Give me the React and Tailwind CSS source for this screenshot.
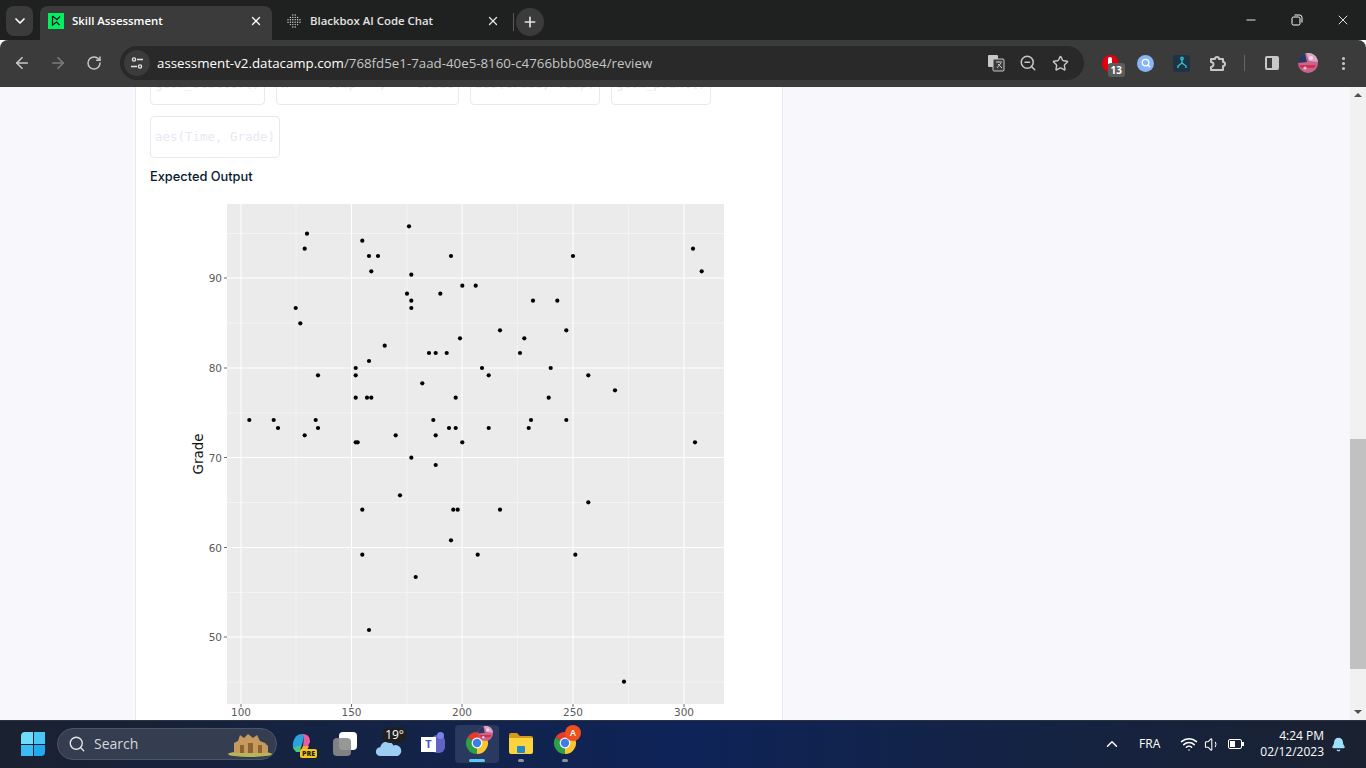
import {
  ArrowLeft,
  ArrowRight,
  Bell,
  ChevronDown,
  ChevronUp,
  EllipsisVertical,
  Minus,
  Plus,
  RotateCw,
  Search,
  Star,
  Volume1,
  Wifi,
  X,
  ZoomOut,
} from "lucide-react";

const sans = "font-['Open_Sans','Noto_Sans',sans-serif]";

// screen pixel positions of the points, read off the plot
const points = [
  [249.3, 420], [273.7, 420], [278, 428], [304.7, 435.3], [315.7, 420], [318, 428], [318, 375.3],
  [295.7, 308], [300.3, 323.3], [304.7, 248.7], [307, 233.7], [362.3, 240.7], [369, 256], [378, 256],
  [371.3, 271.3], [409, 226.3], [411.3, 274.7], [407, 293.7], [411.3, 300.7], [411.3, 308], [451, 256],
  [462.3, 285.7], [475.7, 285.7], [440.3, 293.7], [460, 338.3], [384.7, 345.7], [429, 353], [435.7, 353],
  [446.7, 353], [369, 361], [355.7, 368], [355.7, 375.3], [422.3, 383.3], [355.7, 397.7], [367, 397.7],
  [371.3, 397.7], [455.7, 397.7], [433.3, 420], [449, 428], [455.7, 428], [435.7, 435.3], [395.7, 435.3],
  [355.7, 442.3], [357.7, 442.3], [462.3, 442.3], [411.3, 457.7], [435.7, 465], [400, 495.3], [362.3, 509.7],
  [453.3, 509.7], [457.7, 509.7], [451, 540.3], [362.3, 554.7], [477.7, 554.7], [415.7, 577], [369, 630],
  [573, 256], [693, 248.7], [701.7, 271.3], [533, 300.7], [557.3, 300.7], [500, 330.3], [566.3, 330.3],
  [524.3, 338.3], [520, 353], [482, 368], [550.7, 368], [488.7, 375.3], [588.3, 375.3], [615, 390.3],
  [548.7, 397.7], [531, 420], [566.3, 420], [488.7, 428], [528.7, 428], [695, 442.3], [500, 509.7],
  [588.3, 502.3], [575.3, 554.7], [624, 681.7],
];

const xMajor = [[241, "100"], [351.5, "150"], [462, "200"], [573, "250"], [684, "300"]];
const xMinor = [296, 407, 517.5, 628.5];
const yMajor = [[278, "90"], [368, "80"], [457.5, "70"], [547.5, "60"], [637, "50"]];
const yMinor = [233.5, 323, 413, 502.5, 592.5, 682];

const ChromeLogo = ({ className }) => (
  <svg viewBox="0 0 24 24" className={className}>
    <path d="M12 12L2.47 6.5A11 11 0 0 1 21.53 6.5Z" fill="#e33b2e" />
    <path d="M12 12L21.53 6.5A11 11 0 0 1 12 23Z" fill="#fbc531" />
    <path d="M12 12L12 23A11 11 0 0 1 2.47 6.5Z" fill="#2d9f4b" />
    <circle cx="12" cy="12" r="5.4" fill="#fff" />
    <circle cx="12" cy="12" r="4.2" fill="#3a7ee8" />
  </svg>
);

const Avatar = ({ className }) => (
  <svg viewBox="0 0 20 20" className={className}>
    <circle cx="10" cy="10" r="10" fill="#c9648f" />
    <path d="M0 10A10 10 0 0 1 7 .5L9 9Z" fill="#27375f" />
    <path d="M8 0A10 10 0 0 1 20 9L11 8Z" fill="#d9a6c6" />
    <path d="M1 12h17l-2 3H3Z" fill="#d3304f" />
    <circle cx="13" cy="5" r="2" fill="#f2dbe8" />
    <circle cx="7" cy="15" r="1.6" fill="#f0c9d8" />
  </svg>
);

const Tab = ({ active, icon, title, width }) => (
  <div
    className={`flex h-[34px] items-center rounded-t-lg pb-[4px] ${width} ${
      active ? "bg-[#3b3b3b] pl-2 pr-[9px] text-white" : "pl-[14px] pr-2 text-[#e3e3e3]"
    }`}
  >
    {icon}
    <span className={`ml-2 flex-1 text-[11.4px] font-semibold ${sans}`}>{title}</span>
    <X className="size-[14px]" strokeWidth={2.2} />
  </div>
);

const TabStrip = () => (
  <div className="flex h-10 shrink-0 items-end bg-[#1f2120]">
    <div className="mb-1 ml-[6px] mr-[7px] flex h-[30px] w-[27px] items-center justify-center rounded-lg bg-[#3b3b3b]">
      <ChevronDown className="size-4 text-white" strokeWidth={2.5} />
    </div>
    <Tab
      active
      title="Skill Assessment"
      width="w-[232px]"
      icon={
        <svg viewBox="0 0 16 16" className="size-4 shrink-0">
          <rect width="16" height="16" fill="#03ef62" />
          <path d="M4.5 3v9l4-3 3 3M4.5 3l5 4M12 3.5L8.5 7" fill="none" stroke="#05192d" strokeWidth="1.3" />
        </svg>
      }
    />
    <Tab
      title="Blackbox AI Code Chat"
      width="w-[236px]"
      icon={
        <svg viewBox="0 0 16 16" className="size-4 shrink-0" fill="#d5d5d5">
          {[2, 4.4, 6.8, 9.2, 11.6, 14].flatMap((x) =>
            [2, 4.4, 6.8, 9.2, 11.6, 14]
              .filter((y) => (x - 8) ** 2 + (y - 8) ** 2 < 42)
              .map((y) => <circle key={`${x}-${y}`} cx={x} cy={y} r="0.7" />),
          )}
        </svg>
      }
    />
    <div className="mb-[9px] ml-[5px] h-[18px] w-px bg-[#5a5a5a]" />
    <div className="mb-1 ml-[2px] flex size-7 items-center justify-center rounded-full bg-[#3b3b3b]">
      <Plus className="size-4 text-[#e3e3e3]" strokeWidth={2.5} />
    </div>
    <div className="mb-[6px] ml-auto flex h-7 items-center text-white">
      <div className="flex w-[46px] justify-center">
        <Minus className="size-[14px]" strokeWidth={1.5} />
      </div>
      <div className="flex w-[46px] justify-center">
        <svg viewBox="0 0 12 12" className="size-3" fill="none" stroke="#fff">
          <rect x="1" y="3" width="8" height="8" rx="1.5" />
          <path d="M3.5 1h5a2.5 2.5 0 0 1 2.5 2.5v5" />
        </svg>
      </div>
      <div className="flex w-[46px] justify-center pr-[1px]">
        <X className="size-[16px]" strokeWidth={1.3} />
      </div>
    </div>
  </div>
);

const Toolbar = () => (
  <div className="flex h-[47px] shrink-0 items-center rounded-t-lg bg-[#3b3b3b] pb-[1px] text-[#c7c7c7]">
    <div className="flex w-[120px] items-center">
      <div className="flex w-[44px] justify-center">
        <ArrowLeft className="size-[18px]" strokeWidth={2.2} />
      </div>
      <div className="flex w-[28px] justify-center">
        <ArrowRight className="size-[18px] text-[#7c7c7c]" strokeWidth={2.2} />
      </div>
      <div className="flex w-[44px] justify-center">
        <RotateCw className="size-4" strokeWidth={2.2} />
      </div>
    </div>
    <div className="flex h-[34px] w-[964px] items-center rounded-full bg-[#282928] pl-1">
      <div className="flex size-[26px] items-center justify-center rounded-full bg-[#3b3b3b]">
        <svg viewBox="0 0 14 14" className="size-[14px]" fill="none" stroke="#e3e3e3" strokeWidth="1.4">
          <circle cx="4" cy="3.5" r="1.6" />
          <path d="M7 3.5h6M1 10.5h6" />
          <circle cx="10" cy="10.5" r="1.6" />
        </svg>
      </div>
      <div className={`ml-[7px] flex-1 whitespace-nowrap pt-px text-[13.3px] text-[#c4c7c5] ${sans}`}>
        <span className="text-white">assessment-v2.datacamp.com</span>
        /768fd5e1-7aad-40e5-8160-c4766bbb08e4/review
      </div>
      <svg viewBox="0 0 18 18" className="size-[18px]">
        <rect x="1" y="1" width="10" height="12" rx="1" fill="#c7c7c7" />
        <rect x="6" y="5" width="11" height="12" rx="1" fill="#3b3b3b" stroke="#c7c7c7" />
        <path d="M9 8h6M12 7.5v1M10 14l4-5M11 10l4 4" stroke="#c7c7c7" fill="none" />
      </svg>
      <div className="flex w-[46px] justify-center">
        <ZoomOut className="size-[18px]" strokeWidth={2} />
      </div>
      <div className="mr-[15px] flex w-[18px] justify-center">
        <Star className="size-[17px]" strokeWidth={2} />
      </div>
    </div>
    <div className="flex w-[36px] justify-center pl-[16px]">
      <div className="relative size-[17px] shrink-0 rounded-full bg-[#e2000f]">
        <div className="absolute left-[6px] top-[2px] h-[7px] w-1 rounded-t-sm bg-white" />
        <div className={`absolute left-[6px] top-[8px] rounded-[3px] bg-[#5c5c5c] px-[3px] text-[10px] font-bold leading-[14px] text-white ${sans}`}>
          13
        </div>
      </div>
    </div>
    <div className="ml-[17px] flex size-[17px] items-center justify-center rounded-full bg-[#8ab4f8]">
      <Search className="size-[10px] text-white" strokeWidth={3} />
    </div>
    <div className="ml-[19px] flex size-[17px] items-center justify-center rounded-[3px] bg-[#1f3347]">
      <svg viewBox="0 0 16 16" className="size-4" fill="none" stroke="#2cc4c4" strokeWidth="1.4">
        <circle cx="8" cy="3.5" r="1.2" />
        <path d="M8 5v3M8 8l-4 3v2M8 8l4 3v2" />
      </svg>
    </div>
    <div className="ml-[18px] flex w-[20px] justify-center">
      <svg viewBox="0 0 18 18" className="size-[18px]" fill="none" stroke="#c7c7c7" strokeWidth="2">
        <path d="M2 5h4a2 2 0 0 1 4 0h4v3a2 2 0 0 1 0 4v4H2v-3a2 2 0 0 0 0-5Z" strokeLinejoin="round" />
      </svg>
    </div>
    <div className="ml-[16px] h-4 w-px bg-[#666]" />
    <div className="ml-[20px] flex h-[14px] w-[14px] overflow-hidden rounded-[2px] border-2 border-[#c7c7c7]">
      <div className="w-1/2" />
      <div className="w-1/2 bg-[#c7c7c7]" />
    </div>
    <Avatar className="ml-[19px] size-5" />
    <EllipsisVertical className="ml-[17px] size-[17px]" strokeWidth={2.4} />
  </div>
);

const Chip = ({ children }) => (
  <div className="flex h-[42px] items-center rounded border border-[#e8e8f0] bg-white px-1 font-['DejaVu_Sans_Mono',monospace] text-[12.47px] whitespace-pre text-[#e8e8f1]">
    {children}
  </div>
);

const Chart = () => (
  <svg viewBox="150 195 600 540" className="mt-2 block h-[540px] w-[600px] shrink-0 font-['DejaVu_Sans',sans-serif]">
    <rect x="227" y="204" width="497" height="500" fill="#ebebeb" />
    {xMinor.map((x) => (
      <line key={x} x1={x} x2={x} y1="204" y2="704" stroke="#f6f6f6" strokeWidth="0.7" />
    ))}
    {yMinor.map((y) => (
      <line key={y} x1="227" x2="724" y1={y} y2={y} stroke="#f6f6f6" strokeWidth="0.7" />
    ))}
    {xMajor.map(([x, label]) => (
      <g key={label}>
        <line x1={x} x2={x} y1="204" y2="704" stroke="#fff" strokeWidth="1" />
        <line x1={x} x2={x} y1="704" y2="707" stroke="#444" strokeWidth="0.8" />
        <text x={x} y="716" textAnchor="middle" fontSize="10.5" fill="#5a5a5a">
          {label}
        </text>
      </g>
    ))}
    {yMajor.map(([y, label]) => (
      <g key={label}>
        <line x1="227" x2="724" y1={y} y2={y} stroke="#fff" strokeWidth="1" />
        <line x1="224" x2="227" y1={y} y2={y} stroke="#444" strokeWidth="0.8" />
        <text x="222" y={y + 4} textAnchor="end" fontSize="10.5" fill="#5a5a5a">
          {label}
        </text>
      </g>
    ))}
    <text transform="translate(203 454) rotate(-90)" textAnchor="middle" fontSize="13.5" fill="#111">
      Grade
    </text>
    {points.map(([x, y]) => (
      <circle key={`${x}-${y}`} cx={x} cy={y} r="2.1" fill="#000" />
    ))}
  </svg>
);

const Scrollbar = () => (
  <div className="flex w-4 shrink-0 flex-col items-center bg-[#f1f1f1]">
    <div className="flex h-4 items-center justify-center">
      <div className="h-0 w-0 border-x-[4px] border-b-[4px] border-x-transparent border-b-[#505050]" />
    </div>
    <div className="mt-[336px] h-[230px] w-full bg-[#c1c1c1]" />
    <div className="mt-auto flex h-4 items-center justify-center">
      <div className="h-0 w-0 border-x-[4px] border-t-[4px] border-x-transparent border-t-[#505050]" />
    </div>
  </div>
);

const Page = () => (
  <div className="flex min-h-0 flex-1 bg-[#f7f7fc]">
    <div className="flex-1 overflow-hidden pl-[135px]">
      <div className="flex h-full w-[648px] flex-col border-x border-[#e8e8f2] bg-white pl-[14px]">
        <div className="-mt-[24px] flex gap-[11px]">
          <Chip>geom_scatter()</Chip>
          <Chip>x     comp   ,    Grade</Chip>
          <Chip>aes(Grade, Temp)</Chip>
          <Chip>geom_point()</Chip>
        </div>
        <div className="mt-[11px] flex">
          <Chip>aes(Time, Grade)</Chip>
        </div>
        <div className="mt-[9px] font-['Inter',sans-serif] text-[12.8px] leading-5 font-medium text-[#05192d]">
          Expected Output
        </div>
        <Chart />
      </div>
    </div>
    <Scrollbar />
  </div>
);

const Slot = ({ active, dot, children }) => (
  <div className={`relative flex h-[38px] w-[44px] items-center justify-center rounded ${active ? "bg-[#2a3a5e]" : ""}`}>
    {children}
    {dot && (
      <div className={`absolute bottom-[1px] h-[3px] rounded-full ${active ? "w-4 bg-[#5cc8f7]" : "w-[6px] bg-[#8b93a3]"}`} />
    )}
  </div>
);

const Taskbar = () => (
  <div className={`flex h-12 shrink-0 items-center border-t border-[#2c3340] bg-gradient-to-r from-[#1a2130] via-[#0e2358] to-[#1a2130] pb-px text-white ${sans}`}>
    <div className="ml-[21px] grid size-6 grid-cols-2 gap-[1px]">
      <div className="rounded-tl-sm bg-[#6fdcfb]" />
      <div className="bg-[#4ac6f6]" />
      <div className="bg-[#3cbcf5]" />
      <div className="rounded-br-sm bg-[#22a8ee]" />
    </div>
    <div className="ml-3 flex h-8 w-[220px] items-center rounded-full border border-[#4a5568] bg-[#343e50] pl-[10px]">
      <Search className="size-[18px] text-[#e5e7eb]" strokeWidth={1.8} />
      <span className="ml-2 flex-1 text-sm text-[#d5d9df]">Search</span>
      <svg viewBox="0 0 46 26" className="mr-[2px] h-[26px] w-[46px]">
        <ellipse cx="22" cy="23" rx="22" ry="3" fill="#b9b45a" />
        <path d="M6 22V12l4-2 2-6 4 3 4-4 5 4 4-3 3 6 5 2 3 3v7Z" fill="#c59a5c" />
        <path d="M12 14h4v8h-4ZM20 12h5v10h-5ZM30 14h4v8h-4Z" fill="#8c6232" />
      </svg>
    </div>
    <div className="ml-[2px] flex items-center">
      <Slot>
        <div className="relative size-6">
          <svg viewBox="0 0 24 24" className="size-6">
            <path d="M4 16C3 8 7 2 13 2l2 3-3 11-4 3Z" fill="#27a4e0" />
            <path d="M13 2c5 0 8 2 8 8l-3 6-4-2 1-9Z" fill="#e85fa0" />
            <path d="M4 16l8-3-1 7H7Z" fill="#49c77c" />
            <path d="M14 14h6l-3 6h-6Z" fill="#f6a93b" />
          </svg>
          <div className="absolute -bottom-[2px] -right-[4px] rounded-[2px] bg-[#f8c619] px-[2px] text-[7px] font-extrabold leading-[9px] text-[#222]">
            PRE
          </div>
        </div>
      </Slot>
      <Slot>
        <div className="relative size-6">
          <div className="absolute right-0 top-0 size-[18px] rounded-sm bg-white" />
          <div className="absolute bottom-0 left-0 size-[18px] rounded-sm bg-[#8c8c8c]/90" />
        </div>
      </Slot>
      <Slot>
        <div className="relative h-7 w-7">
          <svg viewBox="0 0 32 20" className="absolute bottom-0 left-0 h-[18px] w-7">
            <path d="M6 18a5 5 0 0 1 0-10 8 8 0 0 1 15-2 6 6 0 0 1 5 12Z" fill="#9ccdf5" />
          </svg>
          <div className="absolute -right-[4px] -top-[3px] rounded-full bg-[#1f1f1f] px-[3px] text-xs leading-[16px]">19°</div>
        </div>
      </Slot>
      <Slot>
        <div className="relative h-6 w-6">
          <div className="absolute right-0 top-[3px] h-[18px] w-[14px] rounded-md bg-[#6264c4]" />
          <div className="absolute right-[1px] top-0 size-[7px] rounded-full bg-[#7b83eb]" />
          <div className="absolute left-0 top-[5px] flex size-[15px] items-center justify-center bg-white text-[11px] font-bold text-[#4b53bc]">
            T
          </div>
        </div>
      </Slot>
      <Slot active dot>
        <div className="relative mb-[2px] size-6">
          <ChromeLogo className="size-6" />
          <Avatar className="absolute -right-[4px] -top-[5px] size-[15px]" />
        </div>
      </Slot>
      <Slot dot>
        <svg viewBox="0 0 24 22" className="mb-[2px] h-[22px] w-6">
          <path d="M0 3a2 2 0 0 1 2-2h6l3 3h11a2 2 0 0 1 2 2v3H0Z" fill="#d69a1e" />
          <path d="M0 6h24v14a2 2 0 0 1-2 2H2a2 2 0 0 1-2-2Z" fill="#fbd33d" />
          <rect x="8" y="14" width="8" height="7" rx="1" fill="#2088cf" />
        </svg>
      </Slot>
      <Slot dot>
        <div className="relative mb-[2px] size-6">
          <ChromeLogo className="size-6" />
          <div className="absolute -right-[4px] -top-[6px] flex size-4 items-center justify-center rounded-full bg-[#f0501f] text-[9px] font-semibold">
            A
          </div>
        </div>
      </Slot>
    </div>
    <div className="ml-auto flex items-center">
      <ChevronUp className="size-[18px]" strokeWidth={2} />
      <span className="ml-[18px] text-[12px] font-medium">FRA</span>
      <Wifi className="ml-[20px] size-[18px]" strokeWidth={2} />
      <Volume1 className="ml-[6px] size-[17px]" strokeWidth={1.5} />
      <div className="ml-[7px] flex h-[10px] w-[14px] items-center rounded-[2px] border border-white p-[1px]">
        <div className="h-full w-[5px] bg-white" />
      </div>
      <div className="h-1 w-[2px] bg-white" />
      <div className="ml-[16px] flex flex-col items-end text-[12px] leading-[16px]">
        <span>4:24 PM</span>
        <span>02/12/2023</span>
      </div>
      <Bell className="ml-[7px] mr-[20px] size-[15px] fill-[#9ce0fb] text-[#9ce0fb]" strokeWidth={2} />
    </div>
  </div>
);

export default function App() {
  return (
    <div className="flex h-screen w-full flex-col overflow-hidden">
      <TabStrip />
      <Toolbar />
      <Page />
      <Taskbar />
    </div>
  );
}
